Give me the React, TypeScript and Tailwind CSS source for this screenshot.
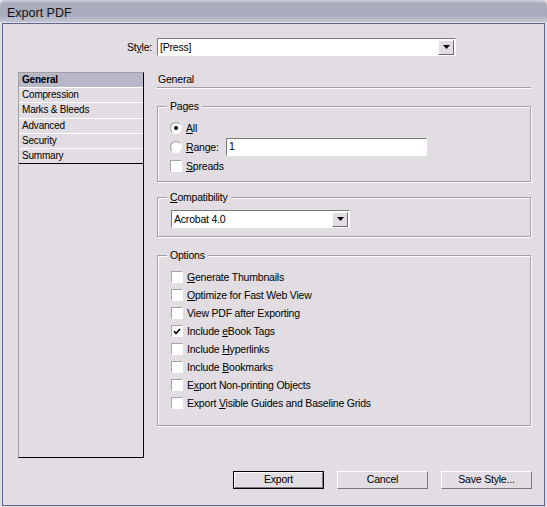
import type { ReactNode } from 'react';

const face = 'bg-[#e1dde2]';
const sunken = 'border border-t-[#7c7c7c] border-l-[#7c7c7c] border-r-white border-b-white';

function Arrow() {
  return (
    <svg width="7" height="4" viewBox="0 0 7 4">
      <polygon points="0,0 7,0 3.5,4" fill="#000" />
    </svg>
  );
}

function Select({ value, className }: { value: string; className: string }) {
  return (
    <div className={`flex items-center bg-white ${sunken} ${className}`}>
      <span className="flex-1 pl-[2px] leading-[14px]">{value}</span>
      <span className={`mr-[1px] flex h-[15px] w-[16px] items-center justify-center ${face} border border-t-white border-l-white border-r-[#6e6e6e] border-b-[#6e6e6e]`}>
        <Arrow />
      </span>
    </div>
  );
}

function Check({ checked, children }: { checked?: boolean; children: ReactNode }) {
  return (
    <div className="flex h-[18px] items-center gap-[4px]">
      <span className={`flex h-[12px] w-[12px] items-center justify-center bg-white ${sunken} border-t-[#a6a6a6] border-l-[#a6a6a6]`}>
        {checked && (
          <svg width="8" height="7" viewBox="0 0 8 7">
            <polyline points="1,3 3,5.5 7,1" fill="none" stroke="#000" strokeWidth="1.6" />
          </svg>
        )}
      </span>
      <span className="leading-[14px]">{children}</span>
    </div>
  );
}

function Radio({ checked }: { checked?: boolean }) {
  return (
    <span className="flex h-[12px] w-[12px] items-center justify-center rounded-full border border-t-[#9a9a9a] border-l-[#9a9a9a] border-r-white border-b-white bg-white">
      {checked && <span className="h-[4px] w-[4px] rounded-full bg-black" />}
    </span>
  );
}

function Group({ title, className, children }: { title: ReactNode; className: string; children: ReactNode }) {
  return (
    <div className={`relative border border-[#a2a0a6] shadow-[inset_1px_1px_0_#fff,1px_1px_0_#fff] ${className}`}>
      <span className={`absolute left-[9px] top-[-8px] ${face} px-[3px] leading-[14px]`}>{title}</span>
      {children}
    </div>
  );
}

function Button({ children, primary }: { children: ReactNode; primary?: boolean }) {
  return (
    <div className={`${primary ? 'border border-black' : ''}`}>
      <div className={`flex h-[16px] w-[89px] items-center justify-center ${face} border border-t-white border-l-white border-r-[#7a7a7a] border-b-[#7a7a7a] ${primary ? '' : 'w-[91px] h-[18px]'}`}>
        {children}
      </div>
    </div>
  );
}

const sections = ['General', 'Compression', 'Marks & Bleeds', 'Advanced', 'Security', 'Summary'];

export default function App() {
  return (
    <div className={`flex h-[507px] w-[547px] flex-col ${face} font-['Liberation_Sans',Arial,sans-serif] text-[10.5px] tracking-[-0.2px] text-black`}>
      <div className="flex h-[22px] items-end rounded-t-[6px] bg-[linear-gradient(180deg,#cfd1da_0%,#a9adbe_15%,#a6aabb_65%,#c2c5d1_100%)] pl-[7px]">
        <span className="text-[12.5px] leading-[17px] tracking-normal text-[#141414]">Export PDF</span>
      </div>
      <div className="flex flex-1 flex-col px-[2px] pb-[1px] pt-[1px]">
        <div className="flex flex-1 flex-col border border-[#5c6690]">
          <div className="mt-[14px] flex items-center">
            <span className="w-[149px] text-right leading-[14px]">
              St<u>y</u>le:
            </span>
            <Select value="[Press]" className="ml-[5px] h-[18px] w-[299px]" />
          </div>

          <div className="mt-[16px] flex pl-[15px]">
            <div className="h-[386px] w-[126px] border border-t-[#a0a0a0] border-l-[#a0a0a0] border-r-black border-b-black">
              {sections.map((s, i) => (
                <div
                  key={s}
                  className={`flex h-[15.2px] items-center border-b pl-[3px] text-[10px] leading-[12px] ${
                    i === 0 ? 'bg-[#b8b8c9] font-bold' : ''
                  } ${i === sections.length - 1 ? 'border-b-black' : 'border-b-white'}`}
                >
                  {s}
                </div>
              ))}
            </div>

            <div className="ml-[13px] flex w-[374px] flex-col">
              <div className="h-[16px] border-b border-[#a2a0a6] pl-[1px] leading-[14px] shadow-[0_1px_0_#fff]">General</div>

              <Group title="Pages" className="mt-[18px] h-[76px]">
                <div className="flex flex-col pl-[12px] pt-[11px]">
                  <div className="flex h-[19px] items-center gap-[4px]">
                    <Radio checked />
                    <span className="leading-[14px]">
                      <u>A</u>ll
                    </span>
                  </div>
                  <div className="flex h-[19px] items-center">
                    <Radio />
                    <span className="ml-[4px] w-[40px] leading-[14px]">
                      <u>R</u>ange:
                    </span>
                    <div className={`flex h-[18px] w-[201px] items-center bg-white pl-[2px] ${sunken}`}>1</div>
                  </div>
                  <div className="flex h-[19px] items-center">
                    <Check>
                      <u>S</u>preads
                    </Check>
                  </div>
                </div>
              </Group>

              <Group
                title={
                  <>
                    <u>C</u>ompatibility
                  </>
                }
                className="mt-[15px] h-[40px]"
              >
                <div className="pl-[13px] pt-[12px]">
                  <Select value="Acrobat 4.0" className="h-[18px] w-[179px]" />
                </div>
              </Group>

              <Group title="Options" className="mt-[18px] h-[171px]">
                <div className="flex flex-col pl-[13px] pt-[12px]">
                  <Check>
                    <u>G</u>enerate Thumbnails
                  </Check>
                  <Check>
                    <u>O</u>ptimize for Fast Web View
                  </Check>
                  <Check>View PDF after Exporting</Check>
                  <Check checked>
                    Include <u>e</u>Book Tags
                  </Check>
                  <Check>
                    Include <u>H</u>yperlinks
                  </Check>
                  <Check>
                    Include <u>B</u>ookmarks
                  </Check>
                  <Check>
                    E<u>x</u>port Non-printing Objects
                  </Check>
                  <Check>
                    Export <u>V</u>isible Guides and Baseline Grids
                  </Check>
                </div>
              </Group>
            </div>
          </div>

          <div className="mt-[13px] flex justify-end gap-[13px] pr-[12px]">
            <Button primary>Export</Button>
            <Button>Cancel</Button>
            <Button>Save Style...</Button>
          </div>
        </div>
      </div>
    </div>
  );
}
